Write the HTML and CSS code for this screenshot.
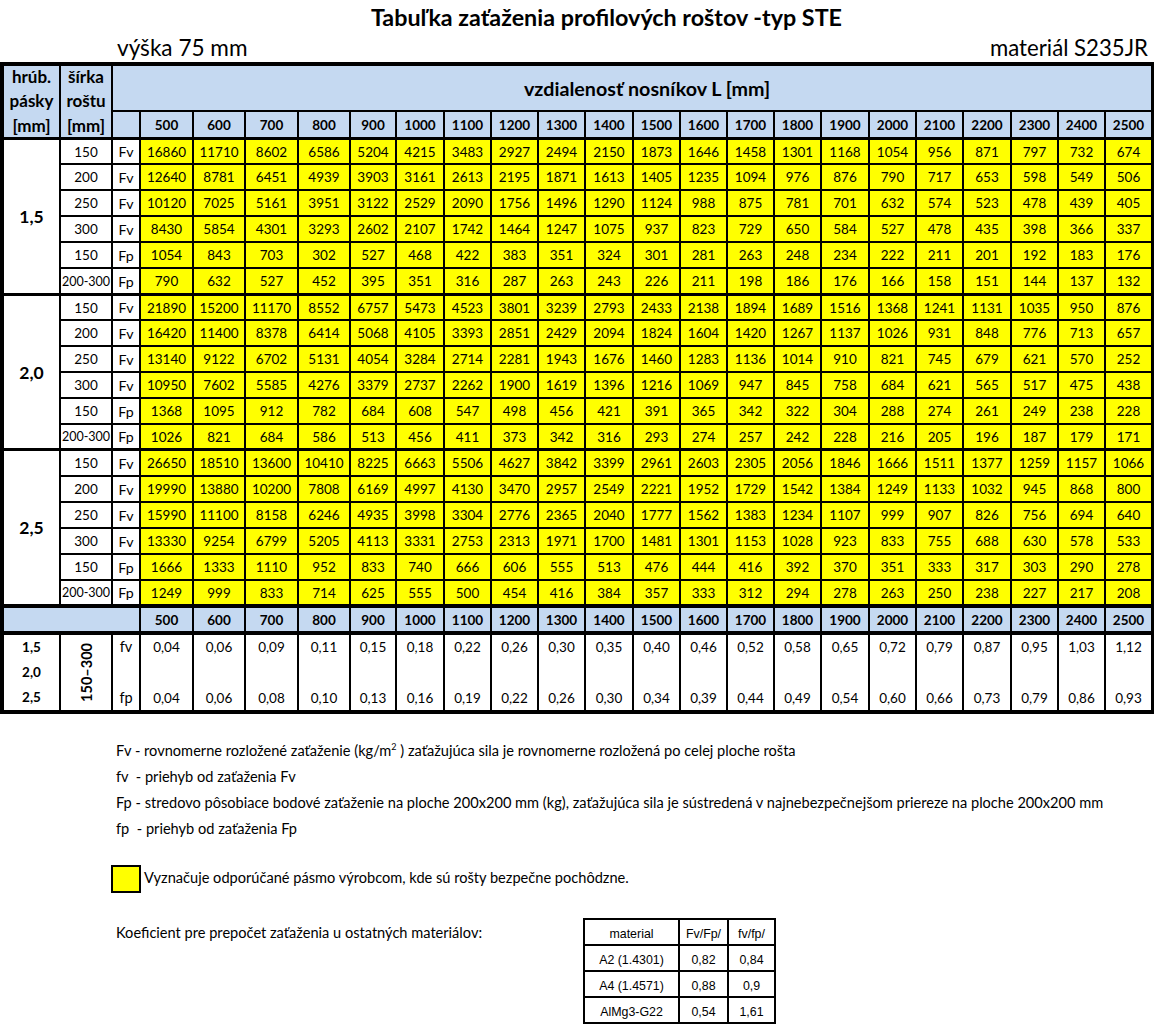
FILE: index.html
```html
<!DOCTYPE html>
<html lang="sk">
<head>
<meta charset="utf-8">
<title>Tabuľka zaťaženia profilových roštov - typ STE</title>
<link rel="stylesheet" href="styles.css">
</head>
<body>
<h1 class="title">Tabuľka zaťaženia profilových roštov -typ STE</h1>
<div class="subhead"><span>výška 75 mm</span><span class="grade">materiál S235JR</span></div>

<div class="load-table">
  <div class="sec sec-head">
    <div class="stack"><span>hrúb.</span><span>pásky</span><span>[mm]</span></div>
    <div class="stack"><span>šírka</span><span>roštu</span><span>[mm]</span></div>
    <div class="span-l">vzdialenosť nosníkov L [mm]</div>
    <div></div>
    <div>500</div><div>600</div><div>700</div><div>800</div><div>900</div><div>1000</div><div>1100</div><div>1200</div><div>1300</div><div>1400</div><div>1500</div><div>1600</div><div>1700</div><div>1800</div><div>1900</div><div>2000</div><div>2100</div><div>2200</div><div>2300</div><div>2400</div><div>2500</div>
  </div>

  <div class="sec sec-group rows-a">
    <div class="thick">1,5</div>
    <div>150</div><em>Fv</em><b>16860</b><b>11710</b><b>8602</b><b>6586</b><b>5204</b><b>4215</b><b>3483</b><b>2927</b><b>2494</b><b>2150</b><b>1873</b><b>1646</b><b>1458</b><b>1301</b><b>1168</b><b>1054</b><b>956</b><b>871</b><b>797</b><b>732</b><b>674</b>
    <div>200</div><em>Fv</em><b>12640</b><b>8781</b><b>6451</b><b>4939</b><b>3903</b><b>3161</b><b>2613</b><b>2195</b><b>1871</b><b>1613</b><b>1405</b><b>1235</b><b>1094</b><b>976</b><b>876</b><b>790</b><b>717</b><b>653</b><b>598</b><b>549</b><b>506</b>
    <div>250</div><em>Fv</em><b>10120</b><b>7025</b><b>5161</b><b>3951</b><b>3122</b><b>2529</b><b>2090</b><b>1756</b><b>1496</b><b>1290</b><b>1124</b><b>988</b><b>875</b><b>781</b><b>701</b><b>632</b><b>574</b><b>523</b><b>478</b><b>439</b><b>405</b>
    <div>300</div><em>Fv</em><b>8430</b><b>5854</b><b>4301</b><b>3293</b><b>2602</b><b>2107</b><b>1742</b><b>1464</b><b>1247</b><b>1075</b><b>937</b><b>823</b><b>729</b><b>650</b><b>584</b><b>527</b><b>478</b><b>435</b><b>398</b><b>366</b><b>337</b>
    <div>150</div><em>Fp</em><b>1054</b><b>843</b><b>703</b><b>302</b><b>527</b><b>468</b><b>422</b><b>383</b><b>351</b><b>324</b><b>301</b><b>281</b><b>263</b><b>248</b><b>234</b><b>222</b><b>211</b><b>201</b><b>192</b><b>183</b><b>176</b>
    <div class="tight">200-300</div><em>Fp</em><b>790</b><b>632</b><b>527</b><b>452</b><b>395</b><b>351</b><b>316</b><b>287</b><b>263</b><b>243</b><b>226</b><b>211</b><b>198</b><b>186</b><b>176</b><b>166</b><b>158</b><b>151</b><b>144</b><b>137</b><b>132</b>
  </div>

  <div class="sec sec-group rows-b">
    <div class="thick">2,0</div>
    <div>150</div><em>Fv</em><b>21890</b><b>15200</b><b>11170</b><b>8552</b><b>6757</b><b>5473</b><b>4523</b><b>3801</b><b>3239</b><b>2793</b><b>2433</b><b>2138</b><b>1894</b><b>1689</b><b>1516</b><b>1368</b><b>1241</b><b>1131</b><b>1035</b><b>950</b><b>876</b>
    <div>200</div><em>Fv</em><b>16420</b><b>11400</b><b>8378</b><b>6414</b><b>5068</b><b>4105</b><b>3393</b><b>2851</b><b>2429</b><b>2094</b><b>1824</b><b>1604</b><b>1420</b><b>1267</b><b>1137</b><b>1026</b><b>931</b><b>848</b><b>776</b><b>713</b><b>657</b>
    <div>250</div><em>Fv</em><b>13140</b><b>9122</b><b>6702</b><b>5131</b><b>4054</b><b>3284</b><b>2714</b><b>2281</b><b>1943</b><b>1676</b><b>1460</b><b>1283</b><b>1136</b><b>1014</b><b>910</b><b>821</b><b>745</b><b>679</b><b>621</b><b>570</b><b>252</b>
    <div>300</div><em>Fv</em><b>10950</b><b>7602</b><b>5585</b><b>4276</b><b>3379</b><b>2737</b><b>2262</b><b>1900</b><b>1619</b><b>1396</b><b>1216</b><b>1069</b><b>947</b><b>845</b><b>758</b><b>684</b><b>621</b><b>565</b><b>517</b><b>475</b><b>438</b>
    <div>150</div><em>Fp</em><b>1368</b><b>1095</b><b>912</b><b>782</b><b>684</b><b>608</b><b>547</b><b>498</b><b>456</b><b>421</b><b>391</b><b>365</b><b>342</b><b>322</b><b>304</b><b>288</b><b>274</b><b>261</b><b>249</b><b>238</b><b>228</b>
    <div class="tight">200-300</div><em>Fp</em><b>1026</b><b>821</b><b>684</b><b>586</b><b>513</b><b>456</b><b>411</b><b>373</b><b>342</b><b>316</b><b>293</b><b>274</b><b>257</b><b>242</b><b>228</b><b>216</b><b>205</b><b>196</b><b>187</b><b>179</b><b>171</b>
  </div>

  <div class="sec sec-group rows-c">
    <div class="thick">2,5</div>
    <div>150</div><em>Fv</em><b>26650</b><b>18510</b><b>13600</b><b>10410</b><b>8225</b><b>6663</b><b>5506</b><b>4627</b><b>3842</b><b>3399</b><b>2961</b><b>2603</b><b>2305</b><b>2056</b><b>1846</b><b>1666</b><b>1511</b><b>1377</b><b>1259</b><b>1157</b><b>1066</b>
    <div>200</div><em>Fv</em><b>19990</b><b>13880</b><b>10200</b><b>7808</b><b>6169</b><b>4997</b><b>4130</b><b>3470</b><b>2957</b><b>2549</b><b>2221</b><b>1952</b><b>1729</b><b>1542</b><b>1384</b><b>1249</b><b>1133</b><b>1032</b><b>945</b><b>868</b><b>800</b>
    <div>250</div><em>Fv</em><b>15990</b><b>11100</b><b>8158</b><b>6246</b><b>4935</b><b>3998</b><b>3304</b><b>2776</b><b>2365</b><b>2040</b><b>1777</b><b>1562</b><b>1383</b><b>1234</b><b>1107</b><b>999</b><b>907</b><b>826</b><b>756</b><b>694</b><b>640</b>
    <div>300</div><em>Fv</em><b>13330</b><b>9254</b><b>6799</b><b>5205</b><b>4113</b><b>3331</b><b>2753</b><b>2313</b><b>1971</b><b>1700</b><b>1481</b><b>1301</b><b>1153</b><b>1028</b><b>923</b><b>833</b><b>755</b><b>688</b><b>630</b><b>578</b><b>533</b>
    <div>150</div><em>Fp</em><b>1666</b><b>1333</b><b>1110</b><b>952</b><b>833</b><b>740</b><b>666</b><b>606</b><b>555</b><b>513</b><b>476</b><b>444</b><b>416</b><b>392</b><b>370</b><b>351</b><b>333</b><b>317</b><b>303</b><b>290</b><b>278</b>
    <div class="tight">200-300</div><em>Fp</em><b>1249</b><b>999</b><b>833</b><b>714</b><b>625</b><b>555</b><b>500</b><b>454</b><b>416</b><b>384</b><b>357</b><b>333</b><b>312</b><b>294</b><b>278</b><b>263</b><b>250</b><b>238</b><b>227</b><b>217</b><b>208</b>
  </div>

  <div class="sec sec-repeat">
    <div class="span-3"></div>
    <div>500</div><div>600</div><div>700</div><div>800</div><div>900</div><div>1000</div><div>1100</div><div>1200</div><div>1300</div><div>1400</div><div>1500</div><div>1600</div><div>1700</div><div>1800</div><div>1900</div><div>2000</div><div>2100</div><div>2200</div><div>2300</div><div>2400</div><div>2500</div>
  </div>

  <div class="sec sec-deflect">
    <div class="stack bold"><span>1,5</span><span>2,0</span><span>2,5</span></div>
    <div class="bold"><span class="rotated">150–300</span></div>
    <div class="pair labels"><span>fv</span><span>fp</span></div>
    <div class="pair"><span>0,04</span><span>0,04</span></div>
    <div class="pair"><span>0,06</span><span>0,06</span></div>
    <div class="pair"><span>0,09</span><span>0,08</span></div>
    <div class="pair"><span>0,11</span><span>0,10</span></div>
    <div class="pair"><span>0,15</span><span>0,13</span></div>
    <div class="pair"><span>0,18</span><span>0,16</span></div>
    <div class="pair"><span>0,22</span><span>0,19</span></div>
    <div class="pair"><span>0,26</span><span>0,22</span></div>
    <div class="pair"><span>0,30</span><span>0,26</span></div>
    <div class="pair"><span>0,35</span><span>0,30</span></div>
    <div class="pair"><span>0,40</span><span>0,34</span></div>
    <div class="pair"><span>0,46</span><span>0,39</span></div>
    <div class="pair"><span>0,52</span><span>0,44</span></div>
    <div class="pair"><span>0,58</span><span>0,49</span></div>
    <div class="pair"><span>0,65</span><span>0,54</span></div>
    <div class="pair"><span>0,72</span><span>0,60</span></div>
    <div class="pair"><span>0,79</span><span>0,66</span></div>
    <div class="pair"><span>0,87</span><span>0,73</span></div>
    <div class="pair"><span>0,95</span><span>0,79</span></div>
    <div class="pair"><span>1,03</span><span>0,86</span></div>
    <div class="pair"><span>1,12</span><span>0,93</span></div>
  </div>
</div>

<div class="notes">
  <p>Fv - rovnomerne rozložené zaťaženie (kg/m<sup>2</sup> ) zaťažujúca sila je rovnomerne rozložená po celej ploche rošta</p>
  <p>fv &nbsp;- priehyb od zaťaženia Fv</p>
  <p>Fp - stredovo pôsobiace bodové zaťaženie na ploche 200x200 mm (kg), zaťažujúca sila je sústredená v najnebezpečnejšom priereze na ploche 200x200 mm</p>
  <p>fp &nbsp;- priehyb od zaťaženia Fp</p>
</div>

<div class="key">
  <span class="swatch"></span>
  <span class="key-text">Vyznačuje odporúčané pásmo výrobcom, kde sú rošty bezpečne pochôdzne.</span>
</div>

<div class="coef">
  <p class="coef-label">Koeficient pre prepočet zaťaženia u ostatných materiálov:</p>
  <table class="coef-table">
    <tr><td class="c1">material</td><td class="c2">Fv/Fp/</td><td class="c3">fv/fp/</td></tr>
    <tr><td>A2 (1.4301)</td><td>0,82</td><td>0,84</td></tr>
    <tr><td>A4 (1.4571)</td><td>0,88</td><td>0,9</td></tr>
    <tr><td>AlMg3-G22</td><td>0,54</td><td>1,61</td></tr>
  </table>
</div>
</body>
</html>
```
FILE: styles.css
```css
* { box-sizing: border-box; }

html, body {
  margin: 0;
  padding: 0;
  background: #fff;
  color: #000;
  font-family: "Lato", "Liberation Sans", sans-serif;
}

body {
  width: 1154px;
  height: 1025px;
  overflow: hidden;
}

.title {
  margin: 0;
  height: 36px;
  padding-left: 59px;
  text-align: center;
  font-size: 23.3px;
  line-height: 35px;
  font-weight: 700;
}

.subhead {
  display: flex;
  justify-content: space-between;
  align-items: baseline;
  height: 26px;
  padding: 0 6px 0 117px;
  font-size: 22.6px;
  line-height: 23px;
}

.grade {
  font-size: 22.2px;
}

/* Main table: black backing shows through the gaps as rules */
.load-table {
  display: flex;
  flex-direction: column;
  gap: 3px;
  width: 1154px;
  padding: 4px 3px 4px 4px;
  background: #000;
}

.sec {
  display: grid;
  grid-template-columns:
    55px 50px 26px 51px 50px 51px 50px
    44px 46px 45px 45px 45px 46px 45px 45px 45px 45px 46px 45px 45px 46px 45px 45px 45px;
  column-gap: 2px;
  row-gap: 2px;
  font-size: 13.5px;
}

.sec > * {
  display: flex;
  align-items: center;
  justify-content: center;
  background: #fff;
  font-weight: 400;
  font-style: normal;
  min-width: 0;
}

.sec > em {
  font-size: 14.2px;
}

.sec-head > *,
.sec-repeat > * {
  background: #c5d9f1;
  font-weight: 700;
}

.sec-head {
  grid-template-rows: 44px 25px;
}

.sec-head > .stack {
  grid-row: 1 / span 2;
  font-size: 17px;
}

.stack {
  flex-direction: column;
  line-height: 24.6px;
}

.span-l {
  grid-column: 3 / -1;
  padding-left: 30px;
  font-size: 19.7px;
}

.sec-repeat {
  grid-template-rows: 23px;
  margin-top: 1px;
}

.span-3 {
  grid-column: 1 / span 3;
}

.sec-deflect {
  grid-template-rows: 75px;
  margin-top: 1px;
}

.rows-a { grid-template-rows: 23px 24px 24px 24px 24px 24px; }
.rows-b { grid-template-rows: 23px 24px 24px 24px 24px 23px; }
.rows-c { grid-template-rows: 24px 24px 24px 24px 24px 23px; }

.sec-group > .thick {
  grid-row: 1 / span 6;
  font-size: 17.5px;
  font-weight: 700;
}

.sec-group > b {
  background: #ff0;
}

.sec > .tight {
  font-size: 12.5px;
  white-space: nowrap;
}

.sec > .bold {
  font-weight: 700;
}

.sec-deflect > .stack {
  line-height: 25px;
}

.rotated {
  writing-mode: vertical-rl;
  transform: rotate(180deg);
  font-size: 14.5px;
}

.sec > .pair {
  flex-direction: column;
  justify-content: space-between;
  line-height: 24px;
}

.sec > .labels {
  font-size: 14.5px;
}

.notes {
  margin-top: 24px;
  padding-left: 116px;
  font-size: 14.6px;
  line-height: 26px;
}

.notes p {
  margin: 0;
  white-space: nowrap;
}

.notes sup {
  font-size: 9px;
  line-height: 0;
}

.key {
  display: flex;
  align-items: center;
  gap: 3px;
  margin-top: 23px;
  padding-left: 111px;
  height: 28px;
  font-size: 14.6px;
}

.key-text {
  padding-bottom: 3px;
}

.swatch {
  width: 30px;
  height: 28px;
  background: #ff0;
  border: 2px solid #000;
}

.coef {
  display: flex;
  align-items: flex-start;
  margin-top: 25px;
  padding-left: 116px;
}

.coef-label {
  width: 467px;
  margin: 6px 0 0;
  font-size: 14.6px;
  line-height: 18px;
}

.coef-table {
  border-collapse: collapse;
  table-layout: fixed;
  width: 191px;
  font-family: "Liberation Sans", Arial, sans-serif;
  font-size: 12.4px;
}

.coef-table td {
  height: 26px;
  padding: 3px 0 0;
  border: 2px solid #000;
  text-align: center;
}

.c1 { width: 95px; }
.c2 { width: 49px; }
.c3 { width: 47px; }
```
